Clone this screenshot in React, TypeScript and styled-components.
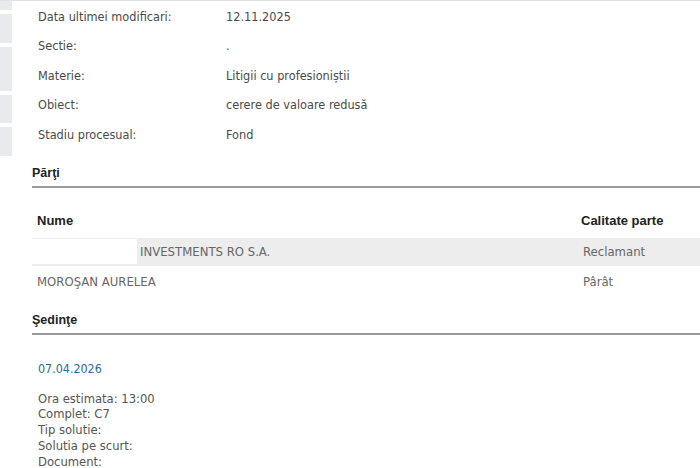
import React from "react";
import styled, { createGlobalStyle } from "styled-components";

const Global = createGlobalStyle`
  html, body { margin: 0; padding: 0; background: #fff; }
  body { width: 700px; height: 468px; overflow: hidden; }
`;

const Page = styled.div`
  width: 700px;
  height: 468px;
  overflow: hidden;
  border-top: 1px solid #e2e2e2;
  box-sizing: border-box;
  font-family: "DejaVu Sans Condensed", "DejaVu Sans", sans-serif;
  font-size: 12.6px;
  color: #4f4f4f;
`;

const Top = styled.div`
  display: flex;
  align-items: flex-start;
`;

const Sidebar = styled.div`
  width: 12px;
  display: flex;
  flex-direction: column;
  gap: 4px;
  flex: none;
`;

const SideBlock = styled.div<{ $h: number }>`
  height: ${(p) => p.$h}px;
  background: #e9eaee;
`;

const Details = styled.div`
  margin-left: 26px;
  padding-top: 0.5px;
`;

const DetailRow = styled.div`
  display: grid;
  grid-template-columns: 188px auto;
  height: 29.5px;
  align-items: center;
  white-space: nowrap;
`;

const Label = styled.span`
  color: #4a4a4a;
`;

const Value = styled.span`
  color: #4a4a4a;
`;

const Section = styled.div`
  padding-left: 32px;
`;

const SectionTitle = styled.div<{ $mt: number }>`
  margin-top: ${(p) => p.$mt}px;
  font-family: "Liberation Sans", Arial, sans-serif;
  font-weight: bold;
  font-size: 12.5px;
  color: #222;
  line-height: 15px;
  padding-bottom: 5px;
  border-bottom: 2px solid #9a9a9a;
`;

const PartyTable = styled.div`
  margin-top: 16px;
  width: 700px;
`;

const PartyRow = styled.div<{ $bg?: string; $h: number }>`
  display: grid;
  grid-template-columns: 549px 1fr;
  height: ${(p) => p.$h}px;
  align-items: center;
  background: ${(p) => p.$bg || "transparent"};
  white-space: nowrap;
`;

const HeadCell = styled.div<{ $pl: number }>`
  font-family: "Liberation Sans", Arial, sans-serif;
  font-weight: bold;
  font-size: 13px;
  color: #222;
  padding-left: ${(p) => p.$pl}px;
`;

const Cell = styled.div<{ $pl: number }>`
  color: #666;
  font-size: 13px;
  padding-left: ${(p) => p.$pl}px;
  height: 100%;
  display: flex;
  align-items: center;
`;

const Redacted = styled.span`
  display: inline-block;
  width: 105px;
  height: 25px;
  background: #fff;
  margin-right: 3px;
`;

const Hearing = styled.div`
  padding-left: 6px;
  margin-top: 26px;
`;

const HearingDate = styled.div`
  color: #2b6a9c;
  font-size: 12.4px;
  line-height: 16px;
`;

const InfoList = styled.div`
  margin-top: 14px;
  font-size: 12.9px;
  line-height: 15.8px;
  color: #555;
`;

const details: [string, string][] = [
  ["Data ultimei modificari:", "12.11.2025"],
  ["Sectie:", "."],
  ["Materie:", "Litigii cu profesioniștii"],
  ["Obiect:", "cerere de valoare redusă"],
  ["Stadiu procesual:", "Fond"],
];

const sideBlocks = [9, 29, 44, 28, 29];

export default function App() {
  return (
    <>
      <Global />
      <Page>
        <Top>
          <Sidebar>
            {sideBlocks.map((h, i) => (
              <SideBlock key={i} $h={h} />
            ))}
          </Sidebar>
          <Details>
            {details.map(([l, v]) => (
              <DetailRow key={l}>
                <Label>{l}</Label>
                <Value>{v}</Value>
              </DetailRow>
            ))}
          </Details>
        </Top>
        <Section>
          <SectionTitle $mt={9.5}>Părţi</SectionTitle>
          <PartyTable>
            <PartyRow $h={34}>
              <HeadCell $pl={5}>Nume</HeadCell>
              <HeadCell $pl={0}>Calitate parte</HeadCell>
            </PartyRow>
            <PartyRow $h={28} $bg="#ededed">
              <Cell $pl={0}>
                <Redacted />
                INVESTMENTS RO S.A.
              </Cell>
              <Cell $pl={2}>Reclamant</Cell>
            </PartyRow>
            <PartyRow $h={31}>
              <Cell $pl={5}>MOROŞAN AURELEA</Cell>
              <Cell $pl={2}>Pârât</Cell>
            </PartyRow>
          </PartyTable>
          <SectionTitle $mt={16}>Şedinţe</SectionTitle>
          <Hearing>
            <HearingDate>07.04.2026</HearingDate>
            <InfoList>
              <div>Ora estimata: 13:00</div>
              <div>Complet: C7</div>
              <div>Tip solutie:</div>
              <div>Solutia pe scurt:</div>
              <div>Document:</div>
            </InfoList>
          </Hearing>
        </Section>
      </Page>
    </>
  );
}
